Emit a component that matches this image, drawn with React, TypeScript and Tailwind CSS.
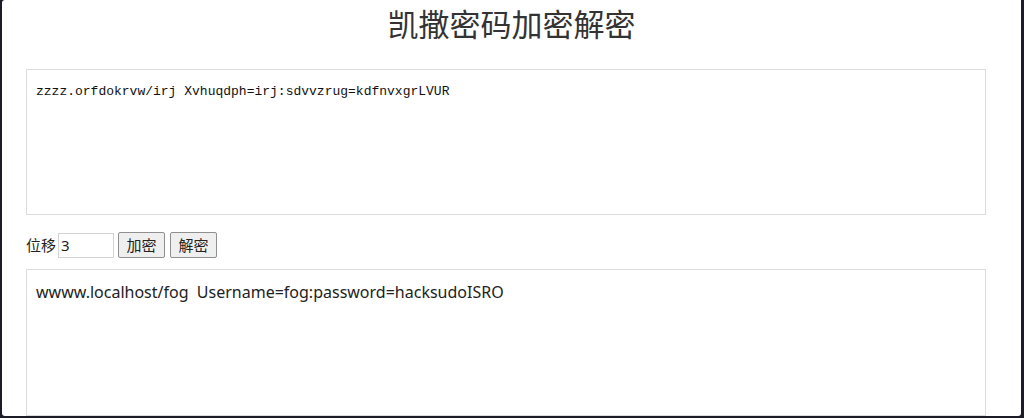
import React from "react";

export default function App() {
  return (
    <div className="w-[1024px] h-[418px] bg-[#1c1c28] overflow-hidden">
      <div className="ml-[2px] mr-[3px] h-[416px] bg-white rounded-tl-[3px] rounded-bl-[3px] rounded-br-[3px] overflow-hidden">
        <div className="pt-[4px] pb-[2px] text-center text-[31px] leading-[38px] text-[#333] font-['Noto_Sans_CJK_SC',sans-serif]">
          凯撒密码加密解密
        </div>
        <div className="ml-[24px] mt-[25px] w-[960px] h-[146px] border border-[#dcdcdc] px-[9px] pt-[12px] text-[13px] leading-[20px] text-[#111] font-['Liberation_Mono',monospace]">
          zzzz.orfdokrvw/irj Xvhuqdph=irj:sdvvzrug=kdfnvxgrLVUR
        </div>
        <div className="ml-[24px] mt-[17px] flex items-center h-[26px] text-[15px] text-[#222] font-['Noto_Sans_CJK_SC',sans-serif]">
          <span className="leading-[26px]">位移</span>
          <div className="ml-[2px] w-[56px] h-[25px] border border-[#d4d4d4] px-[2px] text-[15px] leading-[23px] font-['Noto_Sans',sans-serif]">
            3
          </div>
          <div className="ml-[4px] w-[47px] h-[26px] border border-[#8f8f8f] rounded-[2px] bg-[#efefef] text-center text-[15px] leading-[24px]">
            加密
          </div>
          <div className="ml-[5px] w-[47px] h-[26px] border border-[#8f8f8f] rounded-[2px] bg-[#efefef] text-center text-[15px] leading-[24px]">
            解密
          </div>
        </div>
        <div className="ml-[24px] mt-[11px] w-[960px] h-[147px] border border-[#dcdcdc] px-[9px] pt-[11px] text-[16px] leading-[22px] text-[#222] font-['Noto_Sans',sans-serif]">
          wwww.localhost/fog&nbsp; Username=fog:password=hacksudoISRO
        </div>
      </div>
    </div>
  );
}
